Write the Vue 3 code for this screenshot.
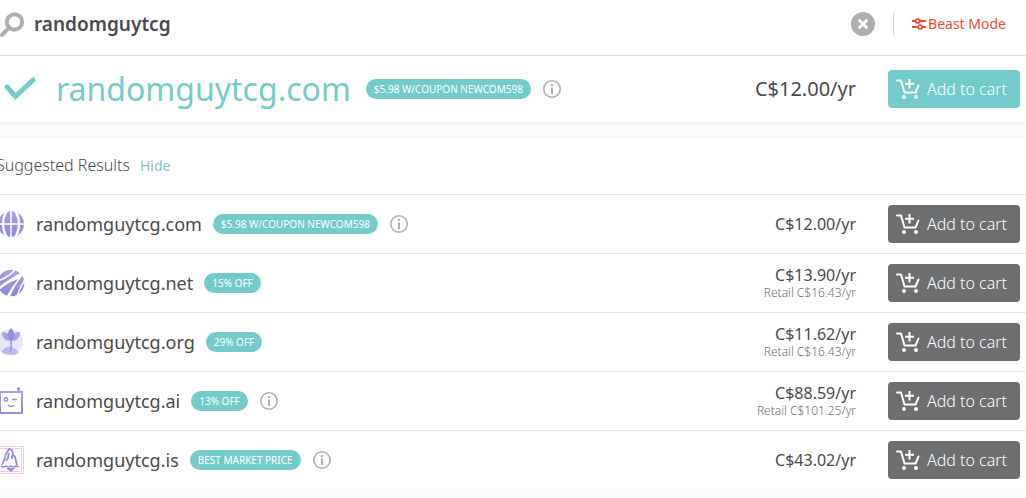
<script setup>
import { ref } from 'vue'

const query = ref('randomguytcg')
const showSuggestions = ref(true)
const results = [
  { tld: 'com', badge: '$5.98 W/COUPON NEWCOM598', info: true, price: 'C$12.00/yr' },
  { tld: 'net', badge: '15% OFF', price: 'C$13.90/yr', retail: 'Retail C$16.43/yr' },
  { tld: 'org', badge: '29% OFF', price: 'C$11.62/yr', retail: 'Retail C$16.43/yr' },
  { tld: 'ai', badge: '13% OFF', info: true, price: 'C$88.59/yr', retail: 'Retail C$101.25/yr' },
  { tld: 'is', badge: 'BEST MARKET PRICE', info: true, price: 'C$43.02/yr' },
]
</script>

<template>
  <main class="page">
    <svg class="defs" width="0" height="0" aria-hidden="true">
      <defs>
        <linearGradient id="violet" x1="0" y1="0" x2="0" y2="1">
          <stop offset="0" stop-color="#a5a4e2" />
          <stop offset="1" stop-color="#8b88df" />
        </linearGradient>
        <clipPath id="disc"><circle cx="13" cy="14" r="13.500" /></clipPath>
        <symbol id="cart" viewBox="0 0 24 22">
          <path d="M1 2.500h4l3.500 12h11l3-7" fill="none" stroke="#fff" stroke-width="2" stroke-linecap="round" stroke-linejoin="round" />
          <path d="M13.500 1v9.500M9 5.700h9" fill="none" stroke="#fff" stroke-width="2" />
          <circle cx="8" cy="19" r="2" fill="#fff" />
          <circle cx="20" cy="19" r="2" fill="#fff" />
        </symbol>
        <symbol id="info" viewBox="0 0 18 18">
          <circle cx="9" cy="9" r="8.200" fill="none" stroke="#aeaeae" stroke-width="1.600" />
          <path d="M9 7.500v6.500M9 4v2" stroke="#aeaeae" stroke-width="2" />
        </symbol>
      </defs>
    </svg>

    <form class="search" @submit.prevent>
      <svg class="glass" width="27" height="26" viewBox="0 0 27 26" aria-hidden="true">
        <circle cx="16.500" cy="11" r="7.700" fill="none" stroke="#aeaeae" stroke-width="4" />
        <path d="M11 17l-7 7" stroke="#aeaeae" stroke-width="4" stroke-linecap="round" />
      </svg>
      <input v-model="query" class="query" type="text" aria-label="Search domains" />
      <button type="button" class="clear" aria-label="Clear search" @click="query = ''">
        <svg width="24" height="24" viewBox="0 0 24 24">
          <circle cx="12" cy="12" r="12" fill="#aeaeae" />
          <path d="M8.500 8.500l7 7M15.500 8.500l-7 7" stroke="#fff" stroke-width="2.800" stroke-linecap="round" />
        </svg>
      </button>
      <a class="beast" href="#beast">
        <svg width="14" height="12" viewBox="0 0 14 12" aria-hidden="true">
          <path d="M0 3h3.500M8 3h6M0 9h5.500M10.500 9H14" stroke="#f0492f" stroke-width="2" />
          <circle cx="5.700" cy="3" r="2" fill="none" stroke="#f0492f" stroke-width="1.700" />
          <circle cx="8.200" cy="9" r="2" fill="none" stroke="#f0492f" stroke-width="1.700" />
        </svg>
        <span>Beast Mode</span>
      </a>
    </form>

    <section class="row exact">
      <svg class="check" width="32" height="24" viewBox="0 0 32 24" aria-hidden="true">
        <path d="M3 10l8.500 9.500L29 3" fill="none" stroke="#73cbcb" stroke-width="5" stroke-linecap="round" stroke-linejoin="miter" />
      </svg>
      <h1 class="name">randomguytcg.com</h1>
      <span class="badge">$5.98 W/COUPON NEWCOM598</span>
      <button class="info" type="button" aria-label="Details"><svg width="18" height="18"><use href="#info" /></svg></button>
      <div class="cost"><span class="price">C$12.00/yr</span></div>
      <button class="add" type="button">
        <svg width="24" height="22" aria-hidden="true"><use href="#cart" /></svg>Add to cart
      </button>
    </section>

    <section class="suggested">
      <header class="heading">
        <h2>Suggested Results</h2>
        <button type="button" class="hide" @click="showSuggestions = !showSuggestions">Hide</button>
      </header>
      <ul v-if="showSuggestions" class="list">
        <li v-for="r in results" :key="r.tld" class="row">
          <svg class="logo" width="28" height="28" viewBox="0 0 28 28" aria-hidden="true">
            <g v-if="r.tld === 'com'">
              <circle cx="13" cy="14" r="13" fill="url(#violet)" />
              <g fill="none" stroke="#fff" stroke-width="1.600">
                <path d="M13 0v28M0 14h28" />
                <ellipse cx="13" cy="14" rx="8" ry="15" stroke-width="2.400" />
              </g>
            </g>
            <g v-else-if="r.tld === 'net'" clip-path="url(#disc)">
              <circle cx="13" cy="14" r="13.500" fill="url(#violet)" />
              <path d="M18 0Q11 8 0 12" fill="none" stroke="#fff" stroke-width="1.600" />
              <path d="M25 3Q13 8 0 19l1 2Q9 14 20 10q-6 8-12 18h4Q16 17 25 6z" fill="#fff" />
              <path d="M27 9q-6 9-9 19h2q2-9 7-15z" fill="#fff" />
            </g>
            <g v-else-if="r.tld === 'org'">
              <circle cx="12" cy="14" r="13" fill="#e8e7f8" />
              <path d="M3 24q5-6 9-5 5 0 9 6-9 5-18-1z" fill="#bbb9ed" />
              <path d="M13 12v9l-1 3" fill="none" stroke="#9694e1" stroke-width="1.500" />
              <path d="M4 4q8 0 9 9-9 0-9-9zM22 4q-8 0-9 9 9 0 9-9z" fill="#a6a4e6" />
              <path d="M13 0q-7 7 0 13 7-6 0-13z" fill="#9290de" />
            </g>
            <g v-else-if="r.tld === 'ai'">
              <path d="M2 5h22v21H2z" fill="none" stroke="url(#violet)" stroke-width="2" />
              <path d="M1 26h24M20.500 4V1" fill="none" stroke="#918ee0" stroke-width="2" />
              <circle cx="20.500" cy="1.500" r="1.500" fill="#918ee0" />
              <circle cx="8" cy="12.500" r="1.700" fill="none" stroke="#918ee0" stroke-width="1.400" />
              <path d="M14 12.500h5M10 18q3 3 6 0" fill="none" stroke="#918ee0" stroke-width="1.600" />
            </g>
            <g v-else>
              <path d="M-2 .5h27.500v27H-2M-2 2.500h25.500v23H-2" fill="none" stroke="#f7ccd5" />
              <path d="M4 19l3-7 1-4 3-5 3 1 1 5 2 2 2 8M11 7l-1 5-2 3M14 9v4" fill="none" stroke="#918ee0" stroke-width="1.800" stroke-linejoin="round" />
              <path d="M3 20q3 2 5 0 3 2 5 0 3 2 5 0 2 1 3 0" fill="none" stroke="#918ee0" stroke-width="1.600" />
              <path d="M8 22h9l-4 4z" fill="#918ee0" />
            </g>
          </svg>
          <h3 class="name">randomguytcg.{{ r.tld }}</h3>
          <span class="badge">{{ r.badge }}</span>
          <button v-if="r.info" class="info" type="button" aria-label="Details"><svg width="18" height="18"><use href="#info" /></svg></button>
          <div class="cost">
            <span class="price">{{ r.price }}</span>
            <span v-if="r.retail" class="retail">{{ r.retail }}</span>
          </div>
          <button class="add" type="button">
            <svg width="24" height="22" aria-hidden="true"><use href="#cart" /></svg>Add to cart
          </button>
        </li>
      </ul>
    </section>
  </main>
</template>

<style>
body {
  background: #fcfcfc;
  overflow: hidden;
}
</style>

<style scoped>
.page {
  margin-left: -4px;
  font-family: "Noto Sans", "Open Sans", sans-serif;
  color: #4a4a4a;
}
.defs {
  display: block;
}
button {
  border: 0;
  padding: 0;
  margin: 0;
  background: none;
  font: inherit;
  cursor: pointer;
}
svg {
  display: block;
  flex: none;
}
.search {
  display: flex;
  align-items: center;
  height: 47px;
  padding: 0 20px 8px 2px;
  border-bottom: 1px solid #e3e3e3;
  background: #fff;
}
.query {
  flex: 1;
  min-width: 0;
  margin-left: 9px;
  padding: 0;
  border: 0;
  outline: 0;
  background: none;
  color: #4a4a4a;
  font: 600 19px/28px "Noto Sans", "Open Sans", sans-serif;
}
.beast {
  display: flex;
  align-items: center;
  gap: 2px;
  margin-left: 18px;
  padding-left: 18px;
  border-left: 1px solid #d2d2d2;
  color: #f0492f;
  font-size: 14px;
  line-height: 24px;
  text-decoration: none;
}
.row {
  display: flex;
  align-items: center;
  height: 58px;
  padding: 0 6px 0 2px;
}
.exact {
  height: 66px;
  background: #fff;
  box-shadow: 0 1px 8px rgba(0, 0, 0, 0.08);
}
.check {
  margin-left: 6px;
}
.name {
  margin: 0 0 0 10px;
  font-size: 18px;
  font-weight: 450;
  line-height: 26px;
}
.exact .name {
  margin: 0 4px 0 20px;
  color: #73cbcb;
  font-size: 32px;
  font-weight: 400;
  line-height: 40px;
}
.badge {
  margin-left: 11px;
  padding: 0 8px;
  border-radius: 10px;
  background: #73cbcb;
  color: #fff;
  font-size: 10px;
  line-height: 20px;
  white-space: nowrap;
}
.info {
  margin-left: 12px;
}
.cost {
  display: flex;
  flex-direction: column;
  align-items: flex-end;
  margin-left: auto;
  margin-right: 32px;
}
.price {
  font-size: 16px;
  line-height: 20px;
}
.exact .price {
  font-size: 20px;
  line-height: 26px;
}
.retail {
  color: #6e6e6e;
  font-size: 12px;
  font-weight: 300;
  line-height: 16px;
}
.add {
  display: flex;
  align-items: center;
  gap: 7px;
  width: 132px;
  height: 38px;
  padding: 0 8px;
  border-radius: 4px;
  background: #6d6e70;
  color: #fff;
  font-size: 16px;
  font-weight: 300;
  white-space: nowrap;
}
.exact .add {
  background: #73cbcb;
}
.suggested {
  margin-top: 16px;
  background: #fff;
  box-shadow: 0 1px 8px rgba(0, 0, 0, 0.08);
}
.heading {
  display: flex;
  align-items: baseline;
  gap: 10px;
  height: 40px;
  padding-top: 16px;
  border-bottom: 1px solid #e3e3e3;
}
.heading h2 {
  margin: 0;
  font-size: 16px;
  font-weight: 300;
  line-height: 22px;
}
.hide {
  color: #82c4c4;
  font-size: 14px;
}
.list {
  margin: 0;
  padding: 0;
  list-style: none;
}
.list .row + .row {
  border-top: 1px solid #e3e3e3;
}
</style>
